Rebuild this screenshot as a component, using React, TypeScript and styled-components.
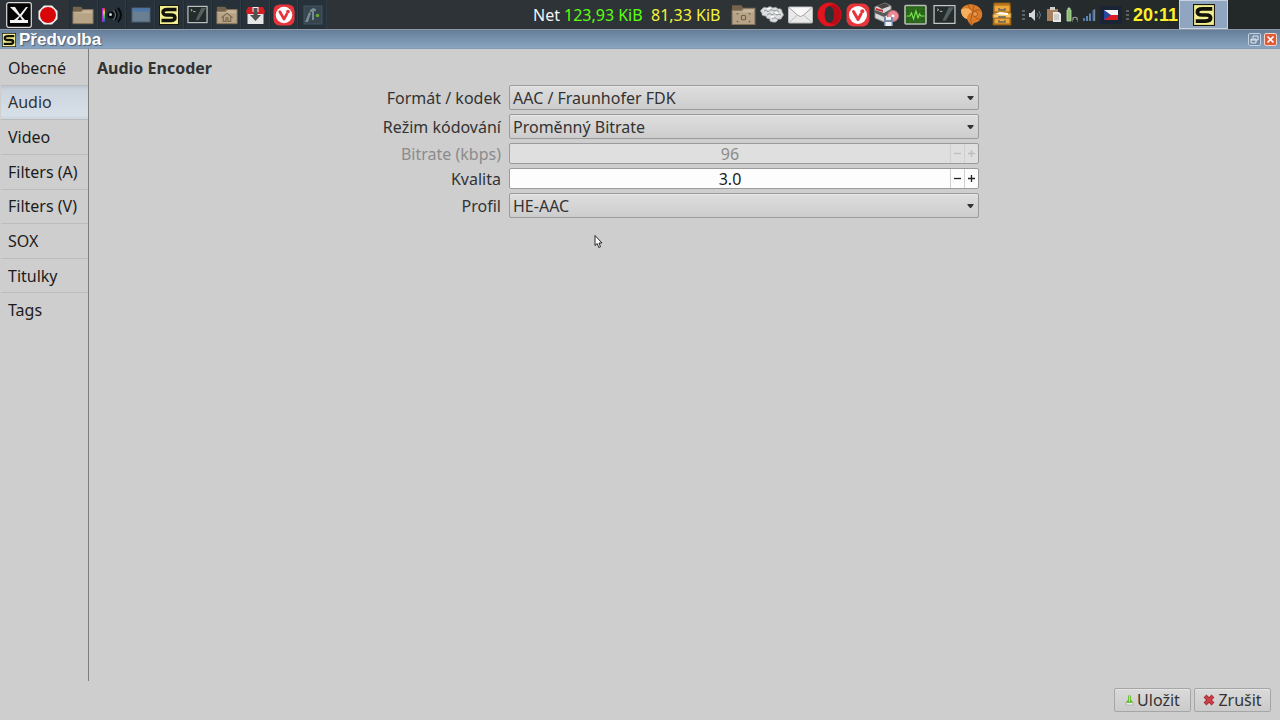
import React, { useState } from "react";
import styled, { createGlobalStyle, css } from "styled-components";

const GlobalStyle = createGlobalStyle`
  * { box-sizing: border-box; }
  body {
    margin: 0;
    background: #cecece;
    color: #333333;
    font: 16px/20px "Noto Sans", "Open Sans", sans-serif;
  }
  button, input, select { font: inherit; color: inherit; margin: 0; }
`;

const Screen = styled.div`
  display: flex;
  flex-direction: column;
  min-height: 100vh;
`;

/* ---------- desktop panel ---------- */

const Panel = styled.header`
  display: flex;
  justify-content: space-between;
  height: 29px;
  padding: 0 52px 0 4px;
  background: linear-gradient(90deg, #2d3338, #2e3336 60%, #232829 92%);
`;

const PanelGroup = styled.div`
  display: flex;
  align-items: center;
`;

const iconButton = css`
  display: flex;
  align-items: center;
  justify-content: center;
  padding: 0;
  border: 0;
  background: transparent;
  svg { display: block; }
`;

const MenuButton = styled.button`
  ${iconButton}
  width: 30px;
  height: 28px;
`;

const StopButton = styled.button`
  ${iconButton}
  width: 28px;
  height: 28px;
`;

const Launchers = styled.div`
  display: grid;
  grid-auto-flow: column;
  grid-auto-columns: 1fr;
  width: 258px;
  height: 29px;
  margin-left: 7px;
`;

const Launcher = styled.button`
  ${iconButton}
  background: #27313a;
  border-left: 1px solid #232b32;
  border-right: 1px solid #303b45;
`;

const NetStats = styled.div`
  display: flex;
  gap: 4px;
  color: #f4f4f4;
  white-space: nowrap;
`;

const Rate = styled.span<{ $tone: string; $width: number }>`
  width: ${(p) => p.$width}px;
  color: ${(p) => p.$tone};
`;

const Applets = styled.div`
  display: grid;
  grid-auto-flow: column;
  grid-auto-columns: 1fr;
  width: 287px;
  height: 29px;
`;

const Applet = styled.button`
  ${iconButton}
`;

const Tray = styled.div`
  display: flex;
  align-items: center;
  gap: 4px;
  padding-left: 6px;
`;

const Clock = styled.time`
  width: 46px;
  font: bold 18px/20px "Liberation Sans", Arial, sans-serif;
  color: #ffef2b;
`;

const ActiveTask = styled.button`
  ${iconButton}
  width: 49px;
  height: 29px;
  border: 1px solid #c8d3df;
  background: #8fa5c0;
`;

/* ---------- window ---------- */

const TitleBar = styled.div`
  display: flex;
  align-items: center;
  gap: 3px;
  height: 20px;
  padding: 1px 3px 0 2px;
  border-top: 1px solid #8d99a8;
  border-bottom: 1px solid #8199b3;
  background: linear-gradient(#667d97, #88a4c1);
`;

const Title = styled.h1`
  flex: 1;
  margin: 0;
  font: bold 17px/18px "Liberation Sans", Arial, sans-serif;
  color: #ffffff;
  text-shadow: 1px 1px 1px #4a5d72;
`;

const WindowButton = styled.button<{ $close?: boolean }>`
  ${iconButton}
  width: 13px;
  height: 13px;
  border: 1px solid ${(p) => (p.$close ? "#f3d2c8" : "#c3d0de")};
  border-radius: 2px;
  background: ${(p) => (p.$close ? "#e05a38" : "#7189a4")};
`;

const Body = styled.div`
  display: flex;
  flex: 1;
`;

const Sidebar = styled.nav`
  width: 89px;
  padding: 2px 0 0 1px;
  border-right: 1px solid #7d7d7d;
`;

const TabList = styled.div`
  display: grid;
  grid-auto-rows: 1fr;
  height: 277px;
`;

const Tab = styled.button<{ $active: boolean }>`
  padding: 0 0 0 7px;
  border: 0;
  border-bottom: 1px solid #bcbcbc;
  background: transparent;
  color: #1c1c1c;
  font-size: 16px;
  text-align: left;
  white-space: nowrap;
  &:last-child { border-bottom-color: transparent; }
  ${(p) =>
    p.$active &&
    css`
      background: linear-gradient(#bcc5ce, #ccd4dd 12%, #d7dfe8 88%, #cbd5df);
      color: #333333;
    `}
`;

const Content = styled.main`
  flex: 1;
  padding: 9px 17px 0 8px;
`;

const SectionTitle = styled.h2`
  margin: 0 0 7px;
  font-size: 16px;
  line-height: 20px;
  font-weight: 700;
`;

const Form = styled.form`
  display: grid;
  grid-template-columns: 120px minmax(0, 470px);
  column-gap: 8px;
  row-gap: 4px;
  align-items: center;
  justify-content: center;
`;

const Label = styled.label<{ $disabled?: boolean }>`
  justify-self: end;
  color: ${(p) => (p.$disabled ? "#8b8b8b" : "#333333")};
  white-space: nowrap;
`;

const SelectBox = styled.div`
  display: grid;
  align-items: center;
  height: 25px;
  border: 1px solid #9b9b9b;
  border-radius: 2px;
  background: linear-gradient(#dedede, #cdcdcd);
  box-shadow: inset 0 1px 0 #e7e7e7;
  & > * { grid-area: 1 / 1; }
  svg { justify-self: end; margin-right: 4px; pointer-events: none; }
`;

const Select = styled.select`
  width: 100%;
  height: 23px;
  padding: 0 20px 0 3px;
  border: 0;
  background: transparent;
  appearance: none;
  outline: none;
`;

const Spin = styled.div<{ $disabled?: boolean }>`
  display: flex;
  height: 21px;
  border: 1px solid #9b9b9b;
  border-radius: 2px;
  background: ${(p) => (p.$disabled ? "#dfdfdf" : "#fdfdfd")};
  color: ${(p) => (p.$disabled ? "#8b8b8b" : "#1c1c1c")};
`;

const SpinInput = styled.input`
  flex: 1;
  min-width: 0;
  padding: 0;
  border: 0;
  background: transparent;
  text-align: center;
  outline: none;
`;

const SpinButton = styled.button`
  ${iconButton}
  width: 14px;
  border-left: 1px solid #d0d0d0;
  color: #222222;
  &:disabled { color: #bdbdbd; }
`;

const Footer = styled.footer`
  display: flex;
  justify-content: flex-end;
  gap: 3px;
  padding: 7px 9px 8px;
`;

const ActionButton = styled.button`
  ${iconButton}
  gap: 3px;
  width: 77px;
  height: 24px;
  border: 1px solid #a6a6a6;
  border-radius: 2px;
  background: linear-gradient(#dadada, #cbcbcb);
  box-shadow: inset 0 1px 0 #e4e4e4;
`;

const Pointer = styled.svg`
  position: absolute;
  left: 594px;
  top: 234px;
  pointer-events: none;
`;

/* ---------- icons ---------- */

const Logo = ({ size = 20 }: { size?: number }) => (
  <svg width={size} height={size} viewBox="0 0 20 20">
    <rect x=".5" y=".5" width="19" height="19" fill="#f3ef91" stroke="#19190c" />
    <path d="M17.500 4.500H8.500Q4 4.500 4 7.300T8 10H12Q16 10 16 12.700T11.500 15.500H2.500" fill="none" stroke="#111109" strokeWidth="3.400" />
  </svg>
);

const Folder = ({ home, camera, size = 24 }: { home?: boolean; camera?: boolean; size?: number }) => (
  <svg width={size} height={size} viewBox="0 0 24 24">
    <path d="M1 3h9l2 3h11v7H1z" fill="#75634e" />
    <path d="M1 8h9l2-2h11v15.500H1z" fill="#b7a386" stroke="#847159" />
    <path d="M2 9h9l2-2h9v3H2z" fill="#c8b69a" />
    {home && <path d="m6 15 6-5 6 5M8 14v5h3v-4h2v4h3v-5" fill="none" stroke="#7f6a50" strokeWidth="1.300" />}
    {camera && (
      <g fill="none" stroke="#6f5d48">
        <path d="M6 12v-1h1M17 11h1v1M6 18v1h1M17 19h1v-1" />
        <rect x="10" y="13" width="4" height="4" rx="1" />
      </g>
    )}
  </svg>
);

const MenuIcon = () => (
  <svg width="26" height="26" viewBox="0 0 26 26">
    <rect x=".7" y=".7" width="24.600" height="24.600" rx="2" fill="#050505" stroke="#dddddd" strokeWidth="1.200" />
    <path d="M4 5h5l5 7.500L20 5h2l-6.500 9 3.500 4h3v3H4v-3h4l5-4z" fill="#f3f3f3" />
    <path d="m11.500 18 2.500-3.500 2 3.500z" fill="#050505" />
  </svg>
);

const StopIcon = () => (
  <svg width="20" height="20" viewBox="0 0 20 20">
    <path d="M6 .5h8L19.500 6v8L14 19.500H6L.5 14V6z" fill="#f2f2f2" />
    <circle cx="10" cy="10" r="8" fill="#d80509" />
  </svg>
);

const SoundIcon = () => (
  <svg width="22" height="22" viewBox="0 0 22 22">
    <defs>
      <linearGradient id="spectrum" x1="0" y1="0" x2="0" y2="1">
        <stop offset="0" stopColor="#d9262a" />
        <stop offset=".3" stopColor="#e3d32a" />
        <stop offset=".6" stopColor="#2fc64a" />
        <stop offset="1" stopColor="#2a4be0" />
      </linearGradient>
    </defs>
    <path d="M1 4h1v14H1z" fill="#b12fd0" />
    <path d="M2 4h2v14H2z" fill="url(#spectrum)" />
    <circle cx="10" cy="11" r="3.600" fill="#090c0f" />
    <circle cx="9.500" cy="10.500" r="1.500" fill="#c7d0d8" />
    <path d="M13.500 6q4.500 5 0 10M17 4q6 7 0 14" fill="none" stroke="#07090b" strokeWidth="2" />
    <path d="M12.500 6q4 5 0 10" fill="none" stroke="#9ba6af" strokeWidth=".7" />
  </svg>
);

const WindowIcon = () => (
  <svg width="20" height="20" viewBox="0 0 20 20">
    <rect x="1" y="3" width="18" height="14" fill="#6b7f93" stroke="#4b5e72" />
    <rect x="1.500" y="3.500" width="17" height="3" fill="#4b77ac" />
  </svg>
);

const TerminalIcon = ({ size = 21 }: { size?: number }) => (
  <svg width={size} height={size} viewBox="0 0 22 22">
    <rect x="1" y="2.500" width="20" height="17" fill="#232b2b" stroke="#c3c8c6" strokeWidth="1.200" />
    <path d="M9 17 15 4h5l-8 13z" fill="#748080" opacity=".6" />
    <path d="m4 5.500 1.500 1L4 7.500M6.500 8h2.500" fill="none" stroke="#d9dddb" strokeWidth=".8" />
  </svg>
);

const DownloadIcon = () => (
  <svg width="21" height="22" viewBox="0 0 21 22">
    <path d="M2.500 8h16v12h-16z" fill="#e6e6e6" />
    <path d="M3 3h15l2 4.500-1 2.500H2L1 7.500z" fill="#d51e22" />
    <path d="M7.500 3h6v5h-6z" fill="#f3f3f3" />
    <path d="M8.500 4h4v7h3.500l-5.500 6-5.500-6h3.500z" fill="#4f5254" />
  </svg>
);

const VivaldiIcon = ({ size = 22 }: { size?: number }) => (
  <svg width={size} height={size} viewBox="0 0 24 24">
    <rect x=".5" y=".5" width="23" height="23" rx="7" fill="#e8353b" />
    <circle cx="12" cy="12" r="9" fill="#ffffff" />
    <path d="M7.500 8.500 12 16.500l3-5.500" fill="none" stroke="#e8353b" strokeWidth="3" strokeLinecap="round" strokeLinejoin="round" />
    <circle cx="16.300" cy="8.300" r="2" fill="#e8353b" />
  </svg>
);

const ToolsIcon = () => (
  <svg width="20" height="22" viewBox="0 0 20 22">
    <rect x="1" y="2" width="18" height="18" fill="#36454f" stroke="#455661" />
    <path d="m2 18 4-10 2 1-3 9zM7 6l3-2 3 1v2h-2v9H9V8H7z" fill="#788b95" />
    <circle cx="14.500" cy="11.500" r="1.800" fill="#68a531" />
  </svg>
);

const CloudIcon = () => (
  <svg width="25" height="20" viewBox="0 0 25 20">
    <path d="M2 4q2-3 5-1 3-3 6 0 3-2 5 1 4-1 4 3 3 3 0 5 0 3-4 2-1 4-5 3-4 0-3-3-4 0-4-3-5 0-4-3-3-2 0-4z" fill="#dcdedf" stroke="#a0a4a6" strokeWidth=".7" />
    <path d="M4 6q3-2 4 1 3-4 6-1 3-2 5 1M7 10q3-3 5 0 3-3 5 0 2-2 4 0M12 14q3-3 5 0" fill="none" stroke="#8f9395" />
    <path d="M7 4q2-1 3 0M15 8q2-1 3 1M11 12q2-1 3 0" fill="none" stroke="#ffffff" strokeWidth="1.500" />
  </svg>
);

const MailIcon = () => (
  <svg width="25" height="18" viewBox="0 0 25 18">
    <rect x=".5" y="1" width="24" height="16" rx="1" fill="#e9e9e9" stroke="#b9b9b9" />
    <path d="m1 1.500 9 8q2.500 2 5 0l9-8" fill="#f8f8f8" stroke="#a1a1a1" />
    <path d="m1 16.500 8-7M24 16.500l-8-7" stroke="#bcbcbc" />
  </svg>
);

const OperaIcon = () => (
  <svg width="25" height="25" viewBox="0 0 25 25">
    <path fillRule="evenodd" d="M12.500.5a12 12 0 1 0 0 24 12 12 0 0 0 0-24zm0 3.500c3 0 4.800 3.800 4.800 8.500s-1.800 8.500-4.800 8.500-4.800-3.800-4.800-8.500S9.500 4 12.500 4z" fill="#e2141e" />
    <path d="M12.500 21c3 0 4.800-3.800 4.800-8.500S15.500 4 12.500 4c2-2 5-2 7.500 0 5 4 5 13 0 17-2.500 2-5.500 2-7.500 0z" fill="#b80b16" />
  </svg>
);

const PrinterIcon = () => (
  <svg width="25" height="25" viewBox="0 0 25 25">
    <path d="M1 5 11 1l6 3v11l-7 5-9-4z" fill="#dadada" stroke="#8f8f8f" />
    <path d="m3 4 8-3 5 3-8 3z" fill="#4a4444" />
    <path d="m1 8 9 3 7-4v4l-7 4-9-4z" fill="#5a5a5a" />
    <path d="m2 6 7 2v2L2 8z" fill="#c33035" />
    <circle cx="19" cy="14" r="5.500" fill="#e78d98" stroke="#c3606e" />
    <circle cx="19" cy="14" r="1.500" fill="#ffffff" />
    <path d="M10 15h9v9h-9z" fill="#7889a5" />
    <path d="M12 15h5v3h-5zM11.500 20h6v4h-6z" fill="#eef0f3" />
  </svg>
);

const MonitorIcon = () => (
  <svg width="23" height="22" viewBox="0 0 23 22">
    <rect x="1" y="1.500" width="21" height="18.500" rx="1" fill="#276317" stroke="#b9bdb6" strokeWidth="1.600" />
    <path d="M2 5h19M2 9h19M2 13h19M2 17h19M6 2v17M11 2v17M16 2v17" stroke="#397a29" strokeWidth=".6" />
    <path d="M2.500 12H6l1.500-3 2 6 2.500-8 2 7 1.500-4 1.500 2h3.500" fill="none" stroke="#7be552" strokeWidth="1.100" />
  </svg>
);

const ShellIcon = () => (
  <svg width="25" height="24" viewBox="0 0 25 24">
    <path d="M1 7c2-5 9-7 14-5 8 3 9 11 5 15s-6 1-8 6c-2-2-4-4-5-7-4-1-6-5-6-9z" fill="#dc7b27" />
    <path d="M1 7c4-3 9-2 12 2-3 0-6 3-6 7-4-1-6-5-6-9z" fill="#f5b05f" />
    <path d="M8 2c1 3 3 5 5 7M15 2c-2 2-2 4-2 7M22 8c-4-2-7-1-9 1M21 16c-4 1-7-2-8-7M12 22c-2-4-1-8 1-13" fill="none" stroke="#a2501a" strokeWidth=".8" />
    <circle cx="15" cy="11" r="2.500" fill="#e6984d" stroke="#a2501a" strokeWidth=".8" />
  </svg>
);

const CabinetIcon = () => (
  <svg width="20" height="25" viewBox="0 0 20 25">
    <path d="M2 1h16l1 22H1z" fill="#d38a22" stroke="#8b570e" />
    <path d="M2 3h16v7H2zM2 16h16v6H2z" fill="#eda93c" stroke="#9c6519" />
    <path d="m1 12 18-1v5H1z" fill="#f7ca6e" stroke="#a76e21" />
    <path d="m3 12 5-2 8 1v2z" fill="#ffffff" />
    <path d="M7 6v2h6V6M7 14v1h6v-1M7 18v2h6v-2" fill="none" stroke="#65635d" strokeWidth="1.300" />
  </svg>
);

const Grip = () => (
  <svg width="3" height="10" viewBox="0 0 3 10">
    <path d="M0 1h3M0 5h3M0 9h3" stroke="#9a9d9e" />
  </svg>
);

const SpeakerIcon = () => (
  <svg width="13" height="14" viewBox="0 0 13 14">
    <path d="M0 5h2l4-4v12L2 9H0z" fill="#d7d7d7" />
    <path d="M8 5q1.500 2 0 4M10 3q3 4 0 8" fill="none" stroke="#5e7ea7" />
  </svg>
);

const ClipboardIcon = () => (
  <svg width="16" height="16" viewBox="0 0 16 16">
    <path d="M1 2h11v12H1z" fill="#a5805e" />
    <path d="M4 0h5v3H4z" fill="#d0cfcc" />
    <path d="M7 5h6l2 2v8H7z" fill="#e7e7e5" />
    <path d="M8 8h5M8 10h5M8 12h5" stroke="#a4a4a4" strokeWidth=".8" />
  </svg>
);

const BatteryIcon = () => (
  <svg width="13" height="16" viewBox="0 0 13 16">
    <path d="M1 3h1V1h2v2h1v11H1z" fill="#88c26a" stroke="#c3d9b8" strokeWidth=".8" />
    <path d="M7 13v-2q2-1.500 4 0v2M6 14h1M11 14h1" fill="none" stroke="#9aa09d" strokeWidth="1.200" />
  </svg>
);

const SignalIcon = () => (
  <svg width="13" height="14" viewBox="0 0 13 14">
    <path d="M1 10v3" stroke="#6c8fbe" strokeWidth="1.500" />
    <path d="M4 8v5M7 5.500V13" stroke="#5c83b8" strokeWidth="2" />
    <path d="M10.500 2v11" stroke="#5079b2" strokeWidth="2" />
    <path d="M11.700 1v12" stroke="#b6c4d7" strokeWidth=".6" />
  </svg>
);

const FlagIcon = () => (
  <svg width="22" height="18" viewBox="0 0 22 18">
    <rect width="22" height="18" fill="#1b2434" />
    <path d="M4 4h14v5H4z" fill="#f4f4f4" />
    <path d="M4 9h14v5H4z" fill="#dc1c24" />
    <path d="m4 4 7 5-7 5z" fill="#27469c" />
  </svg>
);

const Arrow = () => (
  <svg width="7" height="4" viewBox="0 0 7 4">
    <path d="M.5 0h6v1L4 4H3L.5 1z" fill="#333333" />
  </svg>
);

const Sign = ({ plus }: { plus?: boolean }) => (
  <svg width="7" height="7" viewBox="0 0 7 7">
    <path d={plus ? "M0 3.500h7M3.500 0v7" : "M0 3.500h7"} stroke="currentColor" strokeWidth="1.300" />
  </svg>
);

const SaveIcon = () => (
  <svg width="9" height="12" viewBox="0 0 10 12">
    <path d="M1 9h8v2.500H1z" fill="#f5f5f5" stroke="#8f8f8f" strokeWidth=".6" />
    <path d="M3.500 1.500Q5-.5 6.500 1.500v4L9 9H1l2.500-3.500z" fill="#61bd24" />
    <path d="M5 1v7" stroke="#b9ee82" />
  </svg>
);

const CancelIcon = () => (
  <svg width="12" height="12" viewBox="0 0 12 12">
    <path d="m2 2 8 8M10 2l-8 8" stroke="#a92e35" strokeWidth="4" />
    <path d="m2.500 2.500 7 7M9.500 2.500l-7 7" stroke="#cf4249" strokeWidth="2" />
  </svg>
);

const launchers: [string, React.ReactNode][] = [
  ["Files", <Folder size={22} />],
  ["Sound", <SoundIcon />],
  ["Desktop", <WindowIcon />],
  ["Encoder", <Logo />],
  ["Terminal", <TerminalIcon />],
  ["Home", <Folder home size={22} />],
  ["Downloads", <DownloadIcon />],
  ["Vivaldi", <VivaldiIcon />],
  ["Tools", <ToolsIcon />],
];

const applets: [string, React.ReactNode][] = [
  ["Pictures", <Folder camera size={25} />],
  ["Weather", <CloudIcon />],
  ["Mail", <MailIcon />],
  ["Opera", <OperaIcon />],
  ["Vivaldi", <VivaldiIcon size={24} />],
  ["Packages", <PrinterIcon />],
  ["System monitor", <MonitorIcon />],
  ["Terminal", <TerminalIcon size={23} />],
  ["Nautilus", <ShellIcon />],
  ["Archive", <CabinetIcon />],
];

const tabs = ["Obecné", "Audio", "Video", "Filters (A)", "Filters (V)", "SOX", "Titulky", "Tags"];

function SelectField({ id, label, options }: { id: string; label: string; options: string[] }) {
  return (
    <>
      <Label htmlFor={id}>{label}</Label>
      <SelectBox>
        <Select id={id}>
          {options.map((o) => (
            <option key={o}>{o}</option>
          ))}
        </Select>
        <Arrow />
      </SelectBox>
    </>
  );
}

type SpinProps = { id: string; label: string; initial: number; step: number; digits: number; disabled?: boolean };

function SpinField({ id, label, initial, step, digits, disabled }: SpinProps) {
  const [value, setValue] = useState(initial.toFixed(digits));
  const change = (by: number) => setValue((Number(value) + by).toFixed(digits));
  return (
    <>
      <Label htmlFor={id} $disabled={disabled}>{label}</Label>
      <Spin $disabled={disabled}>
        <SpinInput id={id} inputMode="decimal" value={value} disabled={disabled} onChange={(e) => setValue(e.target.value)} />
        <SpinButton type="button" aria-label={`${label} −`} disabled={disabled} onClick={() => change(-step)}>
          <Sign />
        </SpinButton>
        <SpinButton type="button" aria-label={`${label} +`} disabled={disabled} onClick={() => change(step)}>
          <Sign plus />
        </SpinButton>
      </Spin>
    </>
  );
}

export default function App() {
  const [active, setActive] = useState("Audio");
  return (
    <Screen>
      <GlobalStyle />
      <Panel>
        <PanelGroup>
          <MenuButton aria-label="Menu"><MenuIcon /></MenuButton>
          <StopButton aria-label="Stop"><StopIcon /></StopButton>
          <Launchers>
            {launchers.map(([name, icon]) => (
              <Launcher key={name} aria-label={name}>{icon}</Launcher>
            ))}
          </Launchers>
        </PanelGroup>
        <PanelGroup>
          <NetStats>
            <span>Net</span>
            <Rate $tone="#5cff0f" $width={83}>123,93 KiB</Rate>
            <Rate $tone="#f3f33c" $width={78}>81,33 KiB</Rate>
          </NetStats>
          <Applets>
            {applets.map(([name, icon]) => (
              <Applet key={name} aria-label={name}>{icon}</Applet>
            ))}
          </Applets>
          <Tray>
            <Grip />
            <SpeakerIcon />
            <ClipboardIcon />
            <BatteryIcon />
            <SignalIcon />
            <FlagIcon />
            <Grip />
            <Clock>20:11</Clock>
          </Tray>
          <ActiveTask aria-label="Předvolba"><Logo size={22} /></ActiveTask>
        </PanelGroup>
      </Panel>
      <TitleBar>
        <Logo size={14} />
        <Title>Předvolba</Title>
        <WindowButton aria-label="Restore">
          <svg width="9" height="9" viewBox="0 0 9 9">
            <path d="M3 3V1h5v4H6M1 4h5v4H1zM1 5h5" fill="none" stroke="#e4ebf2" />
          </svg>
        </WindowButton>
        <WindowButton $close aria-label="Close">
          <svg width="9" height="9" viewBox="0 0 9 9">
            <path d="m1.500 1.500 6 6M7.500 1.500l-6 6" stroke="#ffffff" strokeWidth="1.600" />
          </svg>
        </WindowButton>
      </TitleBar>
      <Body>
        <Sidebar>
          <TabList role="tablist" aria-orientation="vertical">
            {tabs.map((t) => (
              <Tab key={t} role="tab" aria-selected={t === active} $active={t === active} onClick={() => setActive(t)}>
                {t}
              </Tab>
            ))}
          </TabList>
        </Sidebar>
        <Content>
          <SectionTitle>Audio Encoder</SectionTitle>
          <Form>
            <SelectField id="codec" label="Formát / kodek" options={["AAC / Fraunhofer FDK"]} />
            <SelectField id="mode" label="Režim kódování" options={["Proměnný Bitrate"]} />
            <SpinField id="bitrate" label="Bitrate (kbps)" initial={96} step={1} digits={0} disabled />
            <SpinField id="quality" label="Kvalita" initial={3} step={0.1} digits={1} />
            <SelectField id="profile" label="Profil" options={["HE-AAC"]} />
          </Form>
        </Content>
      </Body>
      <Footer>
        <ActionButton><SaveIcon />Uložit</ActionButton>
        <ActionButton><CancelIcon />Zrušit</ActionButton>
      </Footer>
      <Pointer width="9" height="15" viewBox="0 0 9 14" aria-hidden="true">
        <path d="M1 1v10l2.200-2 1.600 4 1.700-.8L5 8.500h3z" fill="#ffffff" stroke="#111111" strokeWidth=".9" />
      </Pointer>
    </Screen>
  );
}
